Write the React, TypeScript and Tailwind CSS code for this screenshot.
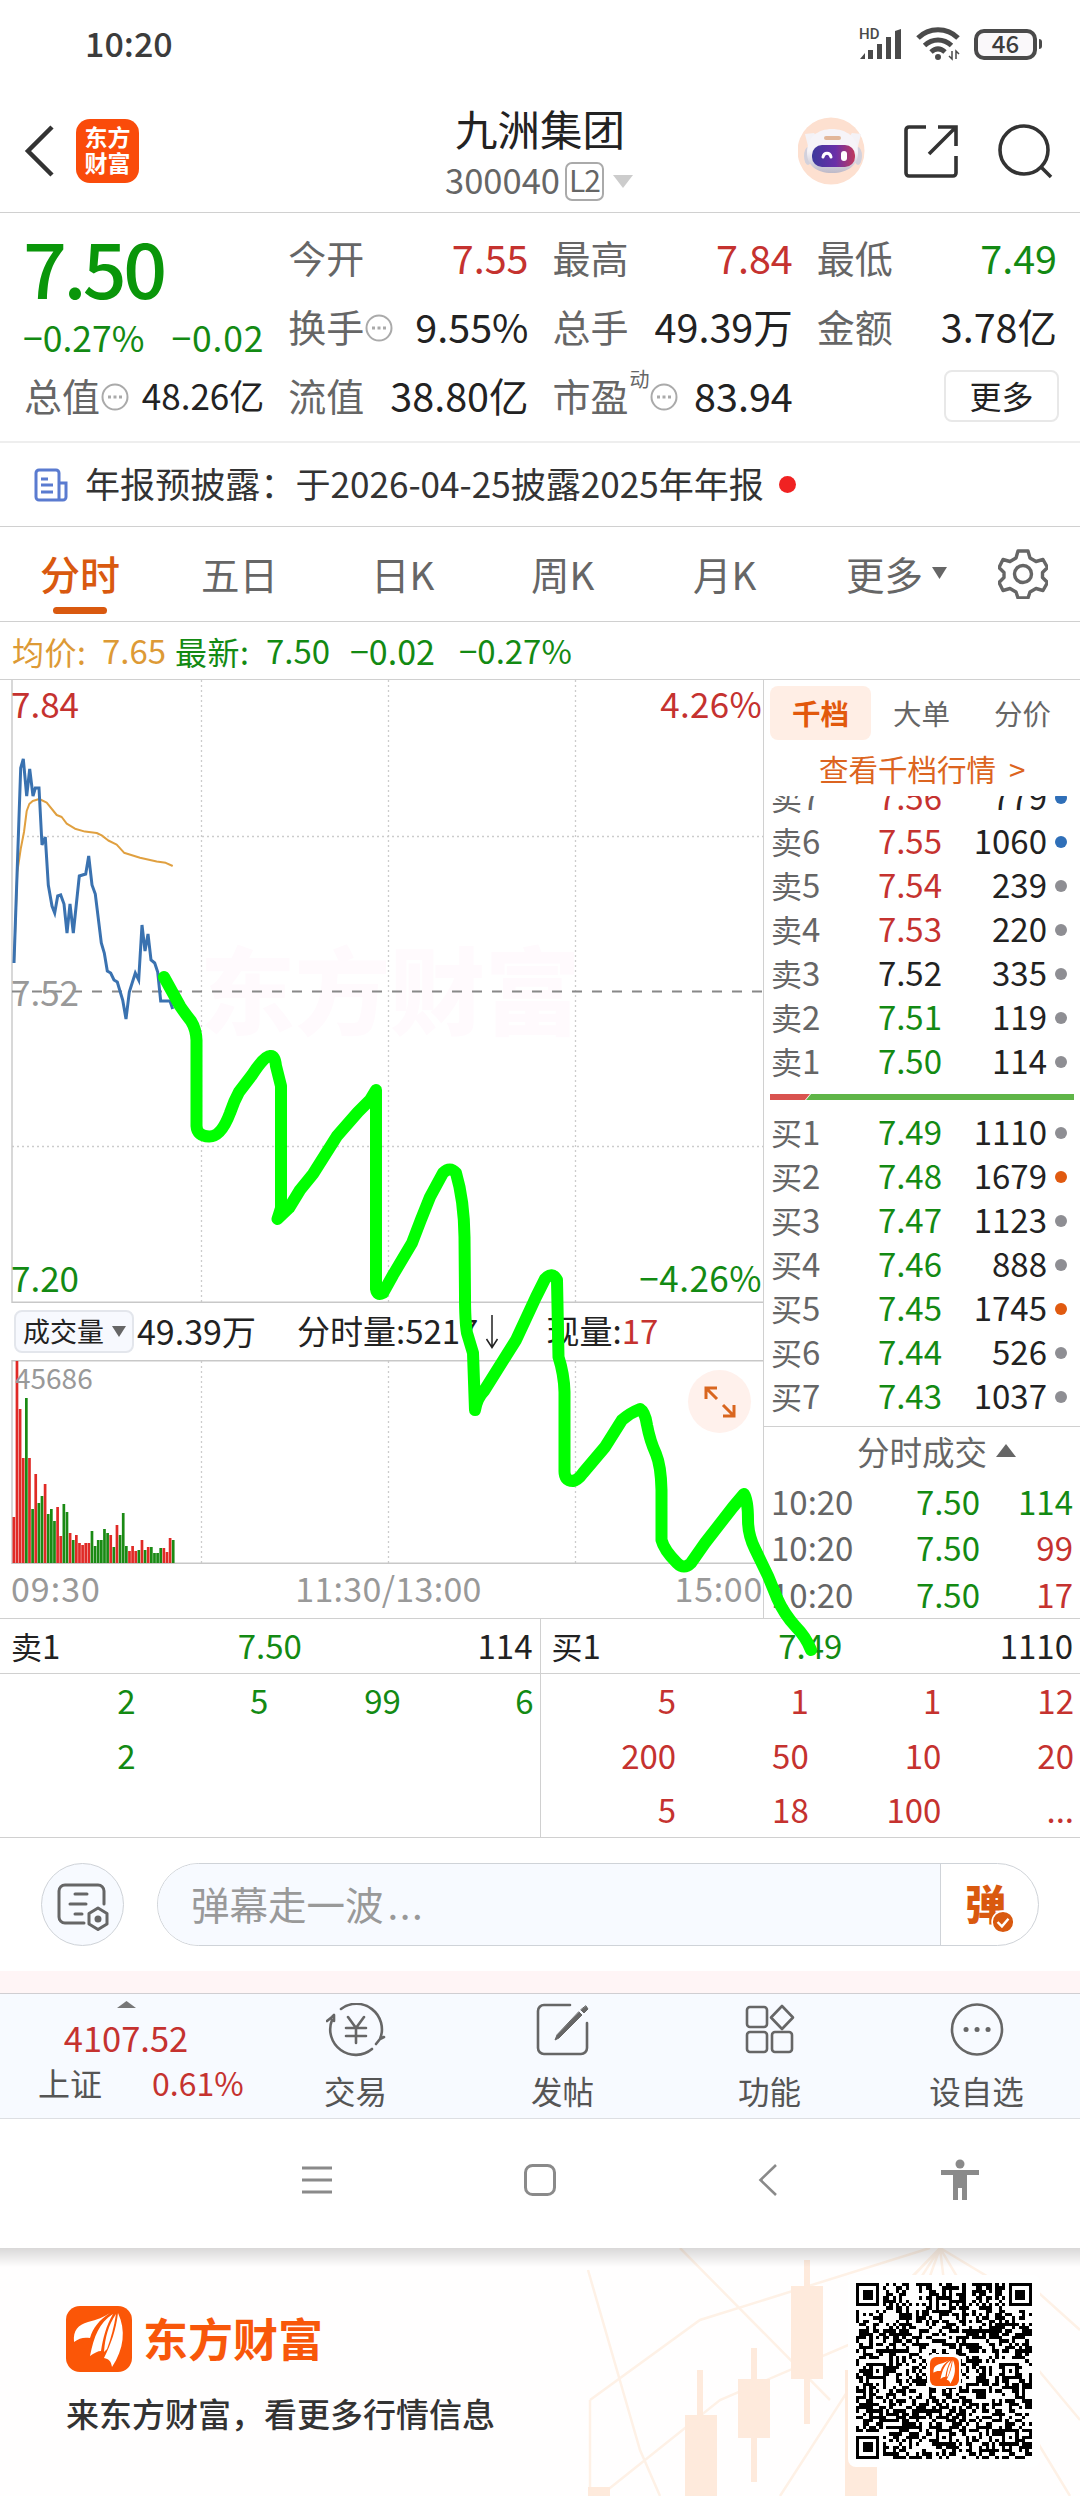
import type { ReactNode } from "react";
import clsx from "clsx";

const RED = "text-[#c5322f]";
const GREEN = "text-[#138a13]";

const sells = [
  { name: "卖7", price: "7.56", vol: "779", color: RED, dot: "bg-[#2f6fb8]" },
  { name: "卖6", price: "7.55", vol: "1060", color: RED, dot: "bg-[#2f6fb8]" },
  { name: "卖5", price: "7.54", vol: "239", color: RED, dot: "bg-[#8e8e93]" },
  { name: "卖4", price: "7.53", vol: "220", color: RED, dot: "bg-[#8e8e93]" },
  { name: "卖3", price: "7.52", vol: "335", color: "text-[#222]", dot: "bg-[#8e8e93]" },
  { name: "卖2", price: "7.51", vol: "119", color: GREEN, dot: "bg-[#8e8e93]" },
  { name: "卖1", price: "7.50", vol: "114", color: GREEN, dot: "bg-[#8e8e93]" },
];

const buys = [
  { name: "买1", price: "7.49", vol: "1110", color: GREEN, dot: "bg-[#8e8e93]" },
  { name: "买2", price: "7.48", vol: "1679", color: GREEN, dot: "bg-[#e05a10]" },
  { name: "买3", price: "7.47", vol: "1123", color: GREEN, dot: "bg-[#8e8e93]" },
  { name: "买4", price: "7.46", vol: "888", color: GREEN, dot: "bg-[#8e8e93]" },
  { name: "买5", price: "7.45", vol: "1745", color: GREEN, dot: "bg-[#e05a10]" },
  { name: "买6", price: "7.44", vol: "526", color: GREEN, dot: "bg-[#8e8e93]" },
  { name: "买7", price: "7.43", vol: "1037", color: GREEN, dot: "bg-[#8e8e93]" },
];

const trades = [
  { time: "10:20", price: "7.50", vol: "114", color: GREEN },
  { time: "10:20", price: "7.50", vol: "99", color: RED },
  { time: "10:20", price: "7.50", vol: "17", color: RED },
];

// one entry per minute: bar height + direction
const volumes =
  "46r 202r 154r 105r 165g 105r 54g 89r 60g 67g 79r 49g 54g 42g 56r 27r 59g 51g 30r 23g 28r 20r 18r 20r 20r 32g 17g 23g 23g 34g 30g 28r 16g 38r 28g 50g 17g 12r 17r 12r 13g 23r 13g 16r 16g 10g 10g 15g 15r 11r 25r 23g".split(
    " ",
  );

const PRICE_LINE =
  "14,963 20.7,768 23.3,759 26.7,796 29.7,769 33,796 35.3,788 39,788 42,845 45.3,837 48.3,885 52,906 54.7,913 57.7,896 60.7,895 64,904 67,933 70,904 73.3,933 79.3,876 85.7,874 88.7,856 92,885 95.3,894 101.3,943 104.3,953 107.3,971 110.7,973 114,980 117.3,982 122.7,1000 126,1019 129.3,992 135.3,973 138.7,980 142,925 145,951 148,934 151,960 154.7,963 157.7,972 160.7,1001 170,1001 172.7,1009";
const AVG_LINE =
  "14,963 17.3,872 20.7,849 24,832 26.7,811 29.3,804 32.7,801 39.3,799 46.7,802.6 56.7,815 61.7,817 66.7,823.6 75,828.7 85,831.6 96.7,833 101.7,835.4 108.3,840.5 116.7,844.7 124,852.7 140,857.7 156.7,861.5 165.7,862.8 172.7,866";

function HeaderIcons() {
  return (
    <div className="flex items-center pr-[27px]">
      <svg className="h-[68px] w-[68px]" viewBox="0 0 68 68">
        <defs>
          <linearGradient id="visor" x1="0" x2="1">
            <stop offset="0" stopColor="#3d3a9c" />
            <stop offset="0.55" stopColor="#6a2fa8" />
            <stop offset="1" stopColor="#c03a5c" />
          </linearGradient>
          <linearGradient id="shell" x1="0" x2="0" y1="0" y2="1">
            <stop offset="0.5" stopColor="#f6f4f8" />
            <stop offset="1" stopColor="#bdb9c8" />
          </linearGradient>
        </defs>
        <circle cx="33" cy="34" r="33.5" fill="#fde0d0" />
        <ellipse cx="10" cy="39" rx="4" ry="9" fill="#d3d1dc" />
        <ellipse cx="60" cy="39" rx="4" ry="9" fill="#d3d1dc" />
        <path d="M7 17l9-1 6 8-11 9zM63 17l-9-1-6 8 11 9z" fill="#f4f2f6" />
        <path d="M9 36c0-16 11-24 25-24s26 8 26 24c0 12-10 20-26 20S9 48 9 36z" fill="url(#shell)" />
        <rect x="26" y="19" width="17" height="4" rx="2" fill="#e2b79a" />
        <rect x="14" y="28" width="43" height="22" rx="10" fill="url(#visor)" />
        <path d="M25 40c1-5 7-5 8 0" fill="none" stroke="#fff" strokeWidth="3" strokeLinecap="round" />
        <rect x="43" y="34" width="6" height="10" rx="3" fill="#fff" />
      </svg>
      <svg className="ml-[38px] h-[54px] w-[54px]" viewBox="0 0 54 54" fill="none" stroke="#333" strokeWidth="3.6">
        <path d="M22 3H5a3 3 0 0 0-3 3v43a3 3 0 0 0 3 3h44a3 3 0 0 0 3-3V32" />
        <path d="M34 3h18v19M52 3L25 30" />
      </svg>
      <svg className="ml-10 h-[55px] w-[55px]" viewBox="0 0 55 55" fill="none" stroke="#333" strokeWidth="3.6">
        <circle cx="26" cy="26" r="24" />
        <path d="M43 43l10 10" />
      </svg>
    </div>
  );
}

function StatusBar() {
  return (
    <div className="flex h-[90px] items-center justify-between pr-[38px] pl-[85px]">
      <span className="mt-[-5px] text-[34px] leading-none font-medium text-[#3c3c3c]">10:20</span>
      <div className="-mt-[2px] flex items-center">
        <svg className="h-8 w-[44px] overflow-visible" viewBox="0 0 44 32" fill="#4a4a4a">
          <text x="-1" y="11" fontSize="15" fontWeight="500" fontFamily="Roboto, sans-serif">HD</text>
          <path d="M0 31l5-6v6zM8 22h5v9H8zM17 16h5v15h-5zM26 9h5v22h-5zM35 3l6-2v30h-6z" />
        </svg>
        <svg className="ml-[12px] h-[34px] w-[44px]" viewBox="0 0 44 34" fill="none" stroke="#4a4a4a" strokeWidth="5">
          <path d="M2 11c11-11 29-11 40 0M8.500 18.500c8-7.500 19-7.500 27 0M15 25c4.500-4 9.500-4 14 0" />
          <circle cx="22" cy="30" r="2" fill="#4a4a4a" strokeWidth="2" />
          <path d="M36 24v8l-3-3M40 32v-8l3 3" strokeWidth="1.500" />
        </svg>
        <div className="ml-[14px] flex h-[31px] w-[63px] items-center justify-center rounded-[10px] border-[4px] border-[#4a4a4a] bg-[#faf8fa]">
          <span className="mt-[-3px] text-[24px] leading-none font-medium text-[#3c3c3c]">46</span>
        </div>
        <div className="ml-[2px] h-[10px] w-[3px] rounded-r bg-[#4a4a4a]" />
      </div>
    </div>
  );
}

function Header() {
  return (
    <div className="grid h-[123px] grid-cols-[1fr_auto_1fr] items-center border-b border-[#d0d0d0]">
      <div className="flex items-center pl-6">
        <svg className="h-[52px] w-[30px]" viewBox="0 0 30 52" fill="none" stroke="#333" strokeWidth="4.500">
          <path d="M28 2L4 26l24 24" />
        </svg>
        <div className="ml-[22px] flex h-[64px] w-[63px] flex-col items-center justify-center rounded-[14px] bg-[#fa4b0a] pb-1 text-[23px] leading-[26px] font-bold text-white">
          <span>东方</span>
          <span>财富</span>
        </div>
      </div>
      <div className="flex flex-col items-center">
        <div className="text-[42.500px] leading-[52px] text-[#222]">九洲集团</div>
        <div className="mt-1 -mb-1 -ml-[2px] flex h-[46px] items-center">
          <span className="pb-1 text-[34.500px] leading-none text-[#666]">300040</span>
          <span className="ml-[5px] flex h-[39px] w-[39px] items-center justify-center rounded-[7px] border-2 border-[#aaa] pb-[5px] text-[30px] leading-none tracking-[-1px] text-[#666]">
            L2
          </span>
          <svg className="ml-[9px] h-[13px] w-5" viewBox="0 0 20 13" fill="#ccc">
            <path d="M0 0h20L10 13z" />
          </svg>
        </div>
      </div>
      <div className="flex justify-end">
        <HeaderIcons />
      </div>
    </div>
  );
}

function MoreDots() {
  return (
    <svg className="ml-px h-7 w-7" viewBox="0 0 28 28" fill="none" stroke="#aaa" strokeWidth="2">
      <circle cx="14" cy="14" r="12.500" />
      <path d="M7 14h3M12.500 14h3M18 14h3" strokeWidth="3" />
    </svg>
  );
}

function Stat({ label, value, color = "text-[#222]", dots, sup, small }: { label: string; value: string; color?: string; dots?: boolean; sup?: string; small?: boolean }) {
  return (
    <div className="flex h-[69px] items-center justify-between">
      <div className="flex items-center text-[38px] leading-none text-[#666]">
        <span className="-mt-1">{label}</span>
        {sup && <span className="-mt-9 -mr-px ml-px text-[20px]">{sup}</span>}
        {dots && <MoreDots />}
      </div>
      <span className={clsx("-mt-1 leading-none", small ? "text-[35px]" : "text-[39.500px]", color)}>{value}</span>
    </div>
  );
}

function Quote() {
  return (
    <div className="grid h-[230px] grid-cols-4 gap-x-6 border-b-2 border-[#eee] pt-[11px] pr-[23px] pl-6">
      <div className="flex flex-col">
        <div className="flex h-[90px] items-center text-[77px] leading-none font-medium tracking-[-3.5px] text-[#0a960a]">
          <span className="-mt-[8px] -ml-px">7.50</span>
        </div>
        <div className={clsx("flex h-[48px] items-center justify-between text-[35.500px] leading-none", GREEN)}>
          <span className="-mt-[3px] -ml-px">−0.27%</span>
          <span className="-mt-[3px] tracking-[0.8px]">−0.02</span>
        </div>
        <Stat label="总值" dots value="48.26亿" small />
      </div>
      <div>
        <Stat label="今开" value="7.55" color={RED} />
        <Stat label="换手" dots value="9.55%" />
        <Stat label="流值" value="38.80亿" />
      </div>
      <div>
        <Stat label="最高" value="7.84" color={RED} />
        <Stat label="总手" value="49.39万" />
        <Stat label="市盈" sup="动" dots value="83.94" />
      </div>
      <div>
        <Stat label="最低" value="7.49" color={GREEN} />
        <Stat label="金额" value="3.78亿" />
        <div className="flex h-[69px] items-center justify-end">
          <div className="-mt-[2px] -mr-[2px] flex h-[52px] w-[115px] items-center justify-center rounded-lg border-2 border-[#e8e8e8] pb-[2px] text-[32px] leading-none text-[#222]">
            更多
          </div>
        </div>
      </div>
    </div>
  );
}

function Notice() {
  return (
    <div className="flex h-[84px] items-center border-b border-[#d0d0d0] pl-[34px]">
      <svg className="h-[34px] w-[34px]" viewBox="0 0 34 34" fill="none" stroke="#5a7bd0" strokeWidth="3">
        <path d="M25 32H5a3 3 0 0 1-3-3V5a3 3 0 0 1 3-3h17a3 3 0 0 1 3 3v27h4a3 3 0 0 0 3-3V15h-7M7 11h7M7 17h12M7 24h12" />
      </svg>
      <span className="-mt-1 ml-[17px] text-[35.100px] leading-none whitespace-nowrap text-[#333]">
        年报预披露：于2026-04-25披露2025年年报
      </span>
      <span className="ml-[15px] h-[17px] w-[17px] rounded-full bg-[#f02222]" />
    </div>
  );
}

function Tabs() {
  return (
    <div className="flex h-[95px] items-center border-b border-[#d0d0d0] text-[38.5px] leading-none text-[#666]">
      <div className="relative ml-10 w-20 text-[40px] text-[#d9590f]">
        <div className="-mt-[3px] font-medium">分时</div>
        <div className="absolute top-[51px] left-[13px] h-[7px] w-[54px] rounded-full bg-[#d9590f]" />
      </div>
      <span className="-mt-[2px] ml-[81px] w-[170px]">五日</span>
      <span className="-mt-[2px] w-[160px]">日K</span>
      <span className="-mt-[2px] w-[162px]">周K</span>
      <span className="-mt-[2px] w-[153px]">月K</span>
      <span className="-mt-[2px]">更多</span>
      <svg className="-mt-[2px] ml-[9px] h-3 w-[15px]" viewBox="0 0 15 12" fill="#666">
        <path d="M0 0h15L7.500 12z" />
      </svg>
      <svg className="ml-[51px] h-[50px] w-[50px]" viewBox="0 0 50 50" fill="none" stroke="#666" strokeWidth="3.400" strokeLinejoin="round">
        <path d="M20 2h10l2 7 6 3.500 7-2 4.500 8-5 5v5l5 5-4.500 8-7-2-6 3.500-2 6H20l-2-6-6-3.500-7 2-4-8 5-5v-5l-5-5 4-8 7 2L18 9z" />
        <circle cx="25" cy="25" r="8.500" />
      </svg>
    </div>
  );
}

function Averages() {
  return (
    <div className="flex h-[58px] items-center border-b border-[#d0d0d0] pl-3 text-[33px] leading-none text-[#138a13]">
      <span className="w-[90px] text-[32px] tracking-[0.5px] text-[#dd9a35]">均价:</span>
      <span className="w-[73px] text-[#dd9a35]">7.65</span>
      <span className="w-[91px] text-[32px] tracking-[0.5px]">最新:</span>
      <span className="w-[84px]">7.50</span>
      <span className="w-[109px] text-[34px]">−0.02</span>
      <span className="text-[33px]">−0.27%</span>
    </div>
  );
}

function PriceChart() {
  return (
    <div className="relative h-[623px] text-[35px] leading-none">
      <svg className="absolute inset-0 h-[623px] w-[752px]" viewBox="11 680 752 623" fill="none">
        <text x="200" y="1028" fontSize="95" fontWeight="900" fill="#fffafd">东方财富</text>
        <g stroke="#ccc" strokeWidth="1.300" strokeDasharray="2 3">
          <path d="M201.500 680V1302M388.500 680V1302M575.500 680V1302M12 836.500H763M12 1146.500H763" />
        </g>
        <path d="M12 680V1302.300H763" stroke="#c8c8c8" strokeWidth="1.400" />
        <path d="M12 991.500H763" stroke="#888" strokeWidth="1.800" strokeDasharray="10 10" />
        <polyline points={AVG_LINE} stroke="#e0a040" strokeWidth="2" strokeLinejoin="round" />
        <polyline points={PRICE_LINE} stroke="#3a72b0" strokeWidth="3" />
      </svg>
      <div className="relative flex h-[614px] flex-col justify-between pt-[5px] pr-px">
        <div className={clsx("flex justify-between", RED)}>
          <span>7.84</span>
          <span className="tracking-[0.3px]">4.26%</span>
        </div>
        <div className="mt-px text-[#999]">7.52</div>
        <div className={clsx("flex justify-between", GREEN)}>
          <span>7.20</span>
          <span className="tracking-[0.5px]">−4.26%</span>
        </div>
      </div>
    </div>
  );
}

function VolumeHeader() {
  return (
    <div className="flex h-[57px] items-center pl-[3px] text-[33px] leading-none text-[#222]">
      <div className="flex h-[43px] w-[120px] items-center rounded-lg border-2 border-[#e3e6ec] bg-[#f7f9fe] pl-[7px] text-[27px]">
        <span className="-mt-[2px]">成交量</span>
        <svg className="ml-2 h-[11px] w-[14px]" viewBox="0 0 14 11" fill="#666">
          <path d="M0 0h14L7 11z" />
        </svg>
      </div>
      <span className="-mt-[2px] ml-[3px] w-[160px] text-[34px]">49.39万</span>
      <span className="-mt-[2px]">分时量:5217</span>
      <svg className="ml-[7px] h-[34px] w-[14px]" viewBox="0 0 14 34" fill="none" stroke="#222" strokeWidth="1.500">
        <path d="M7 0v33M1.500 24L7 32.500 12.500 24" />
      </svg>
      <span className="-mt-[2px] ml-[47px]">
        现量:<span className={RED}>17</span>
      </span>
    </div>
  );
}

function VolumeChart() {
  return (
    <div className="relative h-[204px]">
      <svg className="absolute inset-0 h-[204px] w-[752px]" viewBox="11 1359 752 204" fill="none">
        <path d="M201.500 1360V1562M388.500 1360V1562M575.500 1360V1562" stroke="#ccc" strokeWidth="1.300" strokeDasharray="2 3" />
        <path d="M763 1359.800H12V1562.300H763" stroke="#c8c8c8" strokeWidth="1.400" />
        {volumes.map((v, i) => {
          const h = parseInt(v);
          return <rect key={i} x={12.500 + i * 3.125} y={1562 - h} width="2.700" height={h} fill={v.endsWith("r") ? "#e02a26" : "#1a8a14"} />;
        })}
      </svg>
      <span className="absolute top-[2px] left-[4px] text-[28px] leading-[30px] text-[#999]">45686</span>
      <div className="absolute top-[10px] right-[12px] flex h-[63px] w-[63px] items-center justify-center rounded-full bg-[#fff1ec]">
        <svg className="h-8 w-8" viewBox="0 0 32 32" fill="none" stroke="#d9661f" strokeWidth="3">
          <path d="M2 13V2h11M2 2l11 11M30 19v11H19M30 30L19 19" />
        </svg>
      </div>
    </div>
  );
}

function DepthRow({ row }: { row: (typeof sells)[number] }) {
  return (
    <div className="flex h-11 items-center text-[33px] leading-none">
      <span className="w-[70px] text-[#666]">
        <span className="text-[31px]">{row.name[0]}</span>
        {row.name[1]}
      </span>
      <span className={clsx("w-[101px] text-right", row.color)}>{row.price}</span>
      <span className="w-[105px] text-right text-[#222]">{row.vol}</span>
      <span className={clsx("mt-[2px] ml-[8px] h-3 w-3 rounded-full", row.dot)} />
    </div>
  );
}

function DepthPanel() {
  return (
    <div className="flex flex-1 flex-col border-l border-[#d0d0d0]">
      <div className="mt-[6px] flex h-[55px] items-center pl-[6px] text-[28.5px] leading-none text-[#666]">
        <div className="flex h-[54px] w-[101px] items-center justify-center rounded-lg bg-[#ffeee5] font-bold text-[#e2590c]">千档</div>
        <span className="ml-[22px] w-[101px]">大单</span>
        <span>分价</span>
      </div>
      <div className="h-[55px] pt-[13px] pl-[55px] text-[29.5px] leading-none whitespace-nowrap text-[#dc6420]">
        查看千档行情<span className="ml-[13px]">&gt;</span>
      </div>
      <div className="h-[287px] overflow-hidden pl-[7px]">
        <div className="-mt-[21px]">
          {sells.map((row) => (
            <DepthRow key={row.name} row={row} />
          ))}
        </div>
      </div>
      <svg className="mt-[11px] ml-[6px] h-[6px] w-[304px]" viewBox="0 0 304 6">
        <path d="M0 0h40l-5 6H0z" fill="#d9534f" />
        <path d="M41 0h263v6H36z" fill="#5fb548" />
      </svg>
      <div className="mt-[10px] pl-[7px]">
        {buys.map((row) => (
          <DepthRow key={row.name} row={row} />
        ))}
      </div>
      <div className="mt-[8px] flex h-[53px] items-center border-t border-[#d0d0d0] pl-[93px] text-[32.500px] leading-none text-[#666]">
        <span className="-mt-[2px]">分时成交</span>
        <svg className="-mt-[4px] ml-[9px] h-[13px] w-5" viewBox="0 0 20 13" fill="#666">
          <path d="M0 13h20L10 0z" />
        </svg>
      </div>
      {trades.map((t, i) => (
        <div key={i} className="flex h-[46.500px] items-center pr-[7px] pb-px pl-[7px] text-[33px] leading-none">
          <span className="w-[90px] text-[#666]">{t.time}</span>
          <span className={clsx("w-[119px] text-right", GREEN)}>{t.price}</span>
          <span className={clsx("flex-1 text-right", t.color)}>{t.vol}</span>
        </div>
      ))}
    </div>
  );
}

function QueueSide({ name, price, total, cells, color, last }: { name: string; price: string; total: string; cells: string[]; color: string; last?: boolean }) {
  return (
    <div className={clsx("flex-1", !last && "border-r border-[#d0d0d0]")}>
      <div className="grid h-[55px] grid-cols-3 items-center border-b border-[#d0d0d0] pr-[7px] pb-px pl-[11px] text-[33px] leading-none text-[#222]">
        <span>
          <span className="text-[31px]">{name[0]}</span>
          {name[1]}
        </span>
        <span className={clsx("-ml-1 text-center", GREEN)}>{price}</span>
        <span className="text-right">{total}</span>
      </div>
      <div className={clsx("-mt-px grid grid-cols-4 pr-[6px] pl-[3px] text-right text-[33px] leading-[54.500px]", color)}>
        {cells.map((c, i) => (
          <span key={i}>{c}</span>
        ))}
      </div>
    </div>
  );
}

function Danmu() {
  return (
    <div className="flex h-[133px] items-start pt-[25px] pr-[41px] pl-[41px]">
      <div className="flex h-[83px] w-[83px] items-center justify-center rounded-full border border-[#cfd3d8] bg-[#f7faff]">
        <svg className="mt-1 h-[48px] w-[52px]" viewBox="0 0 52 48" fill="none" stroke="#666" strokeWidth="3" strokeLinecap="round" strokeLinejoin="round">
          <path d="M27 40H8a6 6 0 0 1-6-6V8a6 6 0 0 1 6-6h33a6 6 0 0 1 6 6v13M18 11h12M13 21h16M18 31h7" />
          <path d="M41 25l9 5.500v10.500l-9 5.500-9-5.500V30.500z" />
          <circle cx="41" cy="36" r="2" fill="#666" />
        </svg>
      </div>
      <div className="ml-[33px] flex h-[83px] w-[882px] overflow-hidden rounded-full border border-[#cfd3d8]">
        <div className="flex flex-1 items-center bg-[#f7faff] pb-[2px] pl-[33px] text-[38.500px] leading-none text-[#999]">
          弹幕走一波<span className="ml-1 tracking-[1.5px]">...</span>
        </div>
        <div className="flex w-[98px] items-center border-l border-[#cfd3d8] pl-[24px]">
          <div className="relative text-[41px] leading-none font-black text-[#d9590f]">
            <div className="-mt-1">弹</div>
            <svg className="absolute top-[24px] left-[26px] h-[24px] w-[24px]" viewBox="0 0 22 22">
              <circle cx="11" cy="11" r="10" fill="#d9590f" stroke="#fff" strokeWidth="1.500" />
              <path d="M6 11l4 4 6-7" fill="none" stroke="#fff" strokeWidth="2.200" />
            </svg>
          </div>
        </div>
      </div>
    </div>
  );
}

function BarItem({ label, children }: { label: string; children: ReactNode }) {
  return (
    <div className="flex w-[207px] flex-col items-center pt-[9px]">
      <svg className="h-[54px] w-[60px]" viewBox="0 0 60 54" fill="none" stroke="#666" strokeWidth="2.600" strokeLinecap="round" strokeLinejoin="round">
        {children}
      </svg>
      <span className="mt-[18px] text-[31.500px] leading-none text-[#555]">{label}</span>
    </div>
  );
}

function BottomBar() {
  return (
    <div className="flex h-[126px] border-y border-t-[#d0ced2] border-b-[#dddfe3] bg-[#f7faff]">
      <div className="flex w-[252px] flex-col items-center pt-[7px]">
        <svg className="h-[7px] w-[19px]" viewBox="0 0 19 7" fill="#777">
          <path d="M0 7h19L9.500 0z" />
        </svg>
        <span className={clsx("mt-[12px] text-[34.500px] leading-none", RED)}>4107.52</span>
        <div className="mt-[11px] flex w-full items-center pl-[38px] leading-none">
          <span className="w-[114px] text-[32px] text-[#555]">上证</span>
          <span className={clsx("text-[32px]", RED)}>0.61%</span>
        </div>
      </div>
      <BarItem label="交易">
        <path d="M15 6A25.500 25.500 0 0 1 54 36M58 34l-4 2-4 5M46 46A25.500 25.500 0 0 1 6 17M1 18l5-4 2-2v6M22 14l8 11 8-11M20 25h20M20 33h20M30 25v15" />
      </BarItem>
      <BarItem label="发帖">
        <path d="M37 2H11a6 6 0 0 0-6 6v37a6 6 0 0 0 6 6h37a6 6 0 0 0 6-6V20" />
        <path d="M53 3l2 3-4 4-3-3zM46 9l3 3-23 23-4 2 2-5z" fill="#666" strokeWidth="1" />
      </BarItem>
      <BarItem label="功能">
        <rect x="7" y="4" width="20" height="20" rx="3" />
        <rect x="7" y="29" width="20" height="20" rx="3" />
        <rect x="32" y="29" width="20" height="20" rx="3" />
        <path d="M42 3l11 11.500L42 26 31 14.500z" />
      </BarItem>
      <BarItem label="设自选">
        <circle cx="30" cy="26.500" r="25" />
        <path d="M19 26.500h.1M30 26.500h.1M41 26.500h.1" strokeWidth="5" />
      </BarItem>
    </div>
  );
}

function NavBar() {
  return (
    <div className="flex h-[129px] items-center pb-[8px] pl-[302px]">
      <svg className="h-8 w-[30px]" viewBox="0 0 30 32" stroke="#8a8a8a" strokeWidth="2.800">
        <path d="M0 4h30M0 16h30M0 28h30" />
      </svg>
      <svg className="ml-[192px] h-8 w-8" viewBox="0 0 32 32" fill="none" stroke="#8a8a8a" strokeWidth="3">
        <rect x="1.500" y="1.500" width="29" height="29" rx="7" />
      </svg>
      <svg className="ml-[202px] h-8 w-[19px]" viewBox="0 0 19 32" fill="none" stroke="#8a8a8a" strokeWidth="2.600">
        <path d="M18 1L2.500 16 18 31" />
      </svg>
      <svg className="ml-[164px] h-[42px] w-[38px]" viewBox="0 0 38 42" fill="#8a8a8a">
        <circle cx="19" cy="5" r="4.500" />
        <path d="M0 11h38v5H26v25h-5V29h-4v12h-5V16H0z" />
      </svg>
    </div>
  );
}

function LogoMark({ className }: { className: string }) {
  return (
    <svg className={className} viewBox="0 0 66 66">
      <rect width="66" height="66" rx="14" fill="#fb5607" />
      <g fill="#fff">
        <path d="M8 36C7 24 12 19 22 16c9-2 16-5 22-9-11 7-17 15-20 25-6-1-11 0-16 4z" />
        <path d="M47 8C33 17 28 30 24 50c4-3 8-5 11-5 2-13 5-25 12-37z" />
        <path d="M52 7c8 17 6 36-6 54-1-6-3-8-8-9C45 38 50 24 52 7z" />
        <path d="M50 8c-8 12-11 24-12 38l3-3c4-11 7-22 9-35z" />
      </g>
    </svg>
  );
}

const QR_SIZE = 53;

function qrModule(x: number, y: number) {
  const finders = [
    [3, 3],
    [QR_SIZE - 4, 3],
    [3, QR_SIZE - 4],
  ];
  for (const [fx, fy] of finders) {
    const d = Math.max(Math.abs(x - fx), Math.abs(y - fy));
    if (d <= 4) return d !== 2 && d !== 4;
  }
  for (const [ax, ay] of [[26, 6], [6, 26], [46, 26], [26, 46], [46, 46]]) {
    const d = Math.max(Math.abs(x - ax), Math.abs(y - ay));
    if (d <= 2) return d !== 1;
  }
  if (x === 6 || y === 6) return (x + y) % 2 === 0;
  let n = Math.imul(x + 11, 374761393) ^ Math.imul(y + 7, 668265263);
  n = Math.imul(n ^ (n >>> 13), 1274126177);
  return ((n ^ (n >>> 16)) & 1) === 1;
}

function QrCode() {
  let d = "";
  for (let y = 0; y < QR_SIZE; y++) {
    for (let x = 0; x < QR_SIZE; x++) {
      if (qrModule(x, y)) d += `M${x} ${y}h1v1h-1z`;
    }
  }
  return (
    <div className="relative flex h-[192px] w-[192px] items-center justify-center rounded-lg bg-white">
      <svg className="h-[176px] w-[176px]" viewBox="0 0 53 53" shapeRendering="crispEdges">
        <path d={d} />
      </svg>
      <div className="absolute flex h-[34px] w-[34px] items-center justify-center rounded-md bg-white">
        <LogoMark className="h-[29px] w-[29px]" />
      </div>
    </div>
  );
}

function Banner() {
  return (
    <div className="relative flex h-[248px] justify-between overflow-hidden bg-[#fffefe]">
      <svg className="absolute inset-0 h-[248px] w-[1080px]" viewBox="0 2248 1080 248" fill="none" stroke="#fef1e6" strokeWidth="2.500">
        <path d="M588 2270L640 2450 660 2496M680 2248L830 2400M590 2400L700 2320 930 2248M590 2400V2496M600 2496L720 2400 860 2340" />
        <path d="M940 2248L780 2496M940 2248L850 2340M940 2248L900 2290M940 2248L925 2290M940 2248L945 2290M940 2248L965 2290M940 2248L1010 2290M1030 2285L1080 2330M1030 2360L1080 2420M1030 2430L1070 2496" />
        <g fill="#feeadc">
          <path d="M807 2260V2424M754 2348V2482M700 2370V2420" stroke="#feeadc" strokeWidth="6" />
          <path d="M791 2286h32v93h-32zM738 2379h32v59h-32zM685 2415h32v81h-32zM845 2370h32v126h-32zM588 2487h22v9h-22z" stroke="none" />
        </g>
      </svg>
      <div className="absolute inset-x-0 top-0 h-[19px] bg-gradient-to-b from-black/15 to-transparent" />
      <div className="relative pt-[58px] pl-[66px]">
        <div className="flex h-[66px] items-center">
          <LogoMark className="h-[66px] w-[66px]" />
          <span className="-mt-[4px] ml-[11px] text-[45px] leading-none font-bold text-[#f8570a]">东方财富</span>
        </div>
        <div className="mt-[25px] text-[33px] leading-none font-medium text-[#333]">来东方财富，看更多行情信息</div>
      </div>
      <div className="relative pt-[27px] pr-[40px]">
        <QrCode />
      </div>
    </div>
  );
}

// hand-drawn marker line over the whole page
function Scribble() {
  return (
    <svg className="pointer-events-none absolute inset-0 h-[2496px] w-[1080px]" viewBox="0 0 1080 2496" fill="none">
      <path
        d="M164 977L180 1006Q184 1012 191 1021Q196 1029 196.500 1040V1126Q197 1136 209 1136.500Q221 1137 230 1113Q234 1101 239 1092L252 1075Q264 1056 270 1056Q275 1055 276 1066L281 1086V1208L277.500 1219L289 1208L300 1190L313 1174L337 1136L358 1112L370 1100L376 1090V1289Q377 1296 383 1293L393 1275L412 1243Q421 1219 430 1197L443 1173Q450 1166 456 1173Q464 1200 464.500 1237L465 1295Q465 1322 467 1333L473 1353L475 1410Q477 1398 484 1391L516 1340L536 1297L545 1279Q552 1271 557 1280L558.500 1357Q564 1374 564.500 1392V1470Q564 1481 573 1481Q578 1480 583 1473L605 1447L622 1420Q630 1413 640 1409Q645 1412 647 1425Q650 1441 656 1454Q661 1466 661.500 1490V1540Q664 1550 677 1563Q684 1570 691 1563L705 1543L733 1507L744 1494Q748 1500 748 1520Q748 1535 755 1549L768 1576L777 1598Q784 1614 796 1627Q806 1637 811 1650"
        stroke="#00ff00"
        strokeWidth="12"
        strokeLinecap="round"
        strokeLinejoin="round"
      />
    </svg>
  );
}

export default function App() {
  return (
    <div className="relative h-[2496px] w-[1080px] overflow-hidden bg-white font-['Noto_Sans_CJK_SC',sans-serif]">
      <StatusBar />
      <Header />
      <Quote />
      <Notice />
      <Tabs />
      <Averages />
      <div className="flex h-[939px] border-b border-[#d0d0d0]">
        <div className="w-[763px] pl-[11px]">
          <PriceChart />
          <VolumeHeader />
          <VolumeChart />
          <div className="grid grid-cols-3 pt-[7px] text-[34px] leading-[34px] text-[#999]">
            <span className="tracking-[1px]">09:30</span>
            <span className="ml-[3px] text-center tracking-[0.3px]">11:30/13:00</span>
            <span className="text-right tracking-[0.7px]">15:00</span>
          </div>
        </div>
        <DepthPanel />
      </div>
      <div className="flex h-[219px] border-b border-[#d0d0d0]">
        <QueueSide name="卖1" price="7.50" total="114" color={GREEN} cells={["2", "5", "99", "6", "2"]} />
        <QueueSide name="买1" price="7.49" total="1110" color={RED} cells={["5", "1", "1", "12", "200", "50", "10", "20", "5", "18", "100", "..."]} last />
      </div>
      <Danmu />
      <div className="h-[22px] bg-[#fff5f6]" />
      <BottomBar />
      <NavBar />
      <Banner />
      <Scribble />
    </div>
  );
}
